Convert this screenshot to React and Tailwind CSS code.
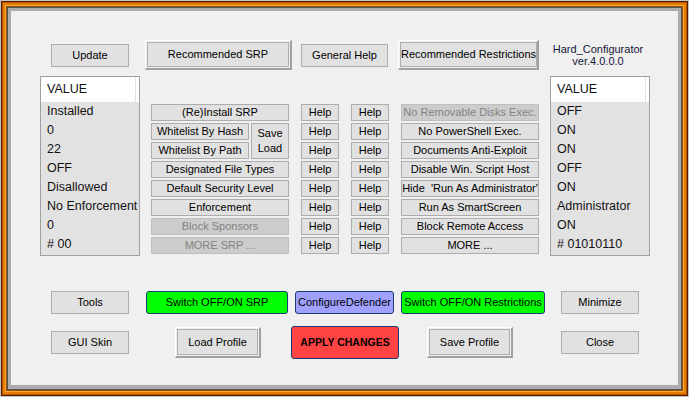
const flat = 'flex items-center justify-center border border-[#adadad] bg-[#e1e1e1] text-black whitespace-pre'
const off = 'flex items-center justify-center border border-[#bfbfbf] bg-[#cccccc] text-[#838383] whitespace-pre'
const colored = 'flex items-center justify-center rounded-[3px] border border-[#1c3a72] text-black whitespace-pre'

const LEFT_VALUES = ['Installed', '0', '22', 'OFF', 'Disallowed', 'No Enforcement', '0', '# 00']
const RIGHT_VALUES = ['OFF', 'ON', 'ON', 'OFF', 'ON', 'Administrator', 'ON', '# 01010110']

const RESTRICTIONS = [
  { label: 'No Removable Disks Exec.', disabled: true },
  { label: 'No PowerShell Exec.' },
  { label: 'Documents Anti-Exploit' },
  { label: 'Disable Win. Script Host' },
  { label: "Hide  'Run As Administrator'" },
  { label: 'Run As SmartScreen' },
  { label: 'Block Remote Access' },
  { label: 'MORE ...' },
]

const ROW_START = [
  'row-start-1',
  'row-start-2',
  'row-start-3',
  'row-start-4',
  'row-start-5',
  'row-start-6',
  'row-start-7',
  'row-start-8',
]

function Raised({ className, children }) {
  return (
    <div
      className={`flex border-t border-l border-r-2 border-b-2 border-t-white border-l-white border-r-[#a0a0a0] border-b-[#a0a0a0] p-px ${className}`}
    >
      <div className="flex flex-1 items-center justify-center whitespace-nowrap border border-[#adadad] bg-[#e1e1e1] text-black">
        {children}
      </div>
    </div>
  )
}

function ValueList({ values }) {
  return (
    <div className="flex h-[180px] w-[100px] flex-col border border-[#a0a0a0] bg-[#e3e2e3] text-[12.5px] text-[#111]">
      <div className="flex h-[25px] bg-white">
        <div className="flex w-[95px] items-center border-r border-[#e2e2e2] pl-[6px]">VALUE</div>
      </div>
      {values.map((v, i) => (
        <div key={i} className="flex h-[19px] items-center pl-[6px]">
          {v}
        </div>
      ))}
    </div>
  )
}

function SrpGrid() {
  return (
    <div className="ml-[11px] mt-[28px] grid grid-cols-[98px_2px_38px_12px_38px_12px_38px_12px_138px] grid-rows-[repeat(8,17px)] gap-y-[2px] self-start">
      <div className={`${flat} col-span-3 col-start-1 row-start-1`}>(Re)Install SRP</div>
      <div className={`${flat} col-start-1 row-start-2`}>Whitelist By Hash</div>
      <div className={`${flat} col-start-1 row-start-3`}>Whitelist By Path</div>
      <div className={`${flat} col-start-3 row-span-2 row-start-2 flex-col leading-[15px]`}>
        <span>Save</span>
        <span>Load</span>
      </div>
      <div className={`${flat} col-span-3 col-start-1 row-start-4`}>Designated File Types</div>
      <div className={`${flat} col-span-3 col-start-1 row-start-5`}>Default Security Level</div>
      <div className={`${flat} col-span-3 col-start-1 row-start-6`}>Enforcement</div>
      <div className={`${off} col-span-3 col-start-1 row-start-7`}>Block Sponsors</div>
      <div className={`${off} col-span-3 col-start-1 row-start-8`}>MORE SRP ...</div>

      {RESTRICTIONS.map((r, i) => (
        <div key={i} className="contents">
          <div className={`${flat} col-start-5 ${ROW_START[i]}`}>Help</div>
          <div className={`${flat} col-start-7 ${ROW_START[i]}`}>Help</div>
          <div className={`${r.disabled ? off : flat} col-start-9 ${ROW_START[i]}`}>{r.label}</div>
        </div>
      ))}
    </div>
  )
}

export default function App() {
  return (
    <div className="h-[397px] w-[689px] font-['Liberation_Sans',Arial,sans-serif] text-[11px]">
      {/* window frame stripes */}
      <div className="flex h-full w-full border border-[#c4c4c4]">
        <div className="flex flex-1 border border-[#5a1c00]">
          <div className="flex flex-1 border border-[#b85400]">
            <div className="flex flex-1 border-2 border-[#e67c00]">
              <div className="flex flex-1 border border-[#f6ac2c]">
                <div className="flex flex-1 border border-[#9a4a0c]">
                  <div className="flex flex-1 border border-[#555555]">
                    <div className="flex flex-1 border-t-[3px] border-l-[3px] border-r-[3px] border-b-[4px] border-[#acacac] bg-[#f0f0f0]">
                      <div className="flex flex-1 flex-col">
                        {/* top buttons */}
                        <div className="mt-[29px] flex h-[30px] items-center pl-[40px]">
                          <div className={`${flat} h-[23px] w-[78px]`}>Update</div>
                          <Raised className="ml-[16px] h-[30px] w-[147px]">Recommended SRP</Raised>
                          <div className={`${flat} ml-[9px] h-[23px] w-[87px]`}>General Help</div>
                          <Raised className="ml-[10px] h-[30px] w-[141px]">Recommended Restrictions</Raised>
                          <div className="ml-[9px] flex w-[100px] flex-col items-center text-[11px] leading-[12px] text-[#14143a]">
                            <span>Hard_Configurator</span>
                            <span>ver.4.0.0.0</span>
                          </div>
                        </div>

                        {/* lists and option buttons */}
                        <div className="mt-[6px] flex pl-[29px]">
                          <ValueList values={LEFT_VALUES} />
                          <SrpGrid />
                          <div className="ml-[11px]">
                            <ValueList values={RIGHT_VALUES} />
                          </div>
                        </div>

                        {/* bottom row 1 */}
                        <div className="mt-[35px] flex h-[23px] pl-[40px]">
                          <div className={`${flat} w-[78px]`}>Tools</div>
                          <div className={`${colored} ml-[17px] w-[142px] bg-[#00ff00]`}>Switch OFF/ON SRP</div>
                          <div className={`${colored} ml-[7px] w-[99px] bg-[#a0a0ff]`}>ConfigureDefender</div>
                          <div className={`${colored} ml-[7px] w-[144px] bg-[#00ff00]`}>Switch OFF/ON Restrictions</div>
                          <div className={`${flat} ml-[16px] w-[78px]`}>Minimize</div>
                        </div>

                        {/* bottom row 2 */}
                        <div className="mt-[12px] flex h-[33px] items-center pl-[40px]">
                          <div className={`${flat} h-[23px] w-[78px]`}>GUI Skin</div>
                          <Raised className="ml-[46px] h-[31px] w-[86px]">Load Profile</Raised>
                          <div className={`${colored} ml-[30px] h-[33px] w-[108px] bg-[#ff4242] text-[10.5px] font-bold text-[#1a0000]`}>
                            APPLY CHANGES
                          </div>
                          <Raised className="ml-[28px] h-[31px] w-[86px]">Save Profile</Raised>
                          <div className={`${flat} ml-[48px] h-[23px] w-[78px]`}>Close</div>
                        </div>
                      </div>
                    </div>
                  </div>
                </div>
              </div>
            </div>
          </div>
        </div>
      </div>
    </div>
  )
}
